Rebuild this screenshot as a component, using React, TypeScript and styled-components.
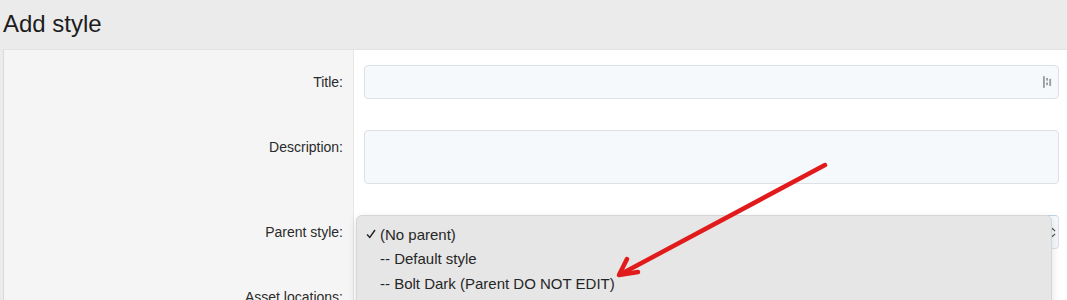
import React from "react";
import styled, { createGlobalStyle } from "styled-components";

const GlobalStyle = createGlobalStyle`
  html, body {
    margin: 0;
    background: #ebebeb;
    font-family: "Liberation Sans", Arial, sans-serif;
    color: #222;
    overflow: hidden;
  }
`;

const options = [
  { label: "(No parent)", checked: true },
  { label: "-- Default style", checked: false },
  { label: "-- Bolt Dark (Parent DO NOT EDIT)", checked: false },
];

function App() {
  return (
    <Page>
      <GlobalStyle />
      <Header>
        <Title>Add style</Title>
      </Header>
      <Panel>
        <Form>
          <Label>Title:</Label>
          <Field>
            <InputWrap>
              <TextInput type="text" />
              <FillIcon viewBox="0 0 10 13">
                <rect x="0" y="0" width="2" height="13" fill="#9a9a9a" />
                <rect x="3.5" y="2" width="2" height="3" fill="#9a9a9a" />
                <rect x="3.5" y="7" width="2" height="3" fill="#9a9a9a" />
                <rect x="7" y="3" width="2" height="8" fill="#9a9a9a" />
              </FillIcon>
            </InputWrap>
          </Field>

          <Label>Description:</Label>
          <Field>
            <TextArea />
          </Field>

          <Label>Parent style:</Label>
          <Field>
            <SelectWrap>
              <SelectBox>
                <Arrows viewBox="0 0 8 12">
                  <path d="M1 4.5 L4 1.5 L7 4.5" fill="none" stroke="#555" strokeWidth="1.4" />
                  <path d="M1 7.5 L4 10.5 L7 7.5" fill="none" stroke="#555" strokeWidth="1.4" />
                </Arrows>
              </SelectBox>
              <Menu>
                {options.map((o) => (
                  <MenuItem key={o.label}>
                    <CheckSlot>
                      {o.checked && (
                        <svg width="10" height="10" viewBox="0 0 10 10">
                          <path d="M1 5.5 L3.8 8.5 L9 1" fill="none" stroke="#222" strokeWidth="1.4" />
                        </svg>
                      )}
                    </CheckSlot>
                    {o.label}
                  </MenuItem>
                ))}
              </Menu>
            </SelectWrap>
          </Field>

          <Label>Asset locations:</Label>
          <Field>
            <Spacer />
          </Field>
        </Form>
      </Panel>
      <Annotation viewBox="0 0 1067 300" width="1067" height="300">
        <g stroke="#e11b1b" strokeWidth="4.5" strokeLinecap="round" fill="none">
          <line x1="825" y1="165" x2="621" y2="274" />
          <path d="M627 259 L619 275 L638 272" strokeLinejoin="round" />
        </g>
      </Annotation>
    </Page>
  );
}

const Page = styled.div`
  position: relative;
  width: 1067px;
  height: 300px;
  overflow: hidden;
`;

const Header = styled.div`
  height: 49px;
  padding: 10px 0 0 3px;
  box-sizing: border-box;
`;

const Title = styled.h1`
  margin: 0;
  font-size: 24px;
  line-height: 28px;
  font-weight: 400;
  color: #1d1d1d;
`;

const Panel = styled.div`
  margin-left: 3px;
  border-left: 1px solid #dadada;
  border-top: 1px solid #e2e2e2;
  background: #fff;
`;

const Form = styled.div`
  display: grid;
  grid-template-columns: 350px 1fr;
`;

const Label = styled.div`
  background: #f5f5f5;
  border-right: 1px solid #e6e6e6;
  padding: 15px 10px 16px 0;
  text-align: right;
  font-size: 14px;
  line-height: 34px;
  color: #2a2a2a;
`;

const Field = styled.div`
  padding: 15px 8px 16px 10px;
`;

const InputWrap = styled.div`
  position: relative;
`;

const TextInput = styled.input`
  display: block;
  width: 100%;
  height: 34px;
  box-sizing: border-box;
  border: 1px solid #dde1e5;
  border-radius: 4px;
  background: #f5f9fc;
  outline: none;
`;

const FillIcon = styled.svg`
  position: absolute;
  right: 7px;
  top: 11px;
  width: 9px;
  height: 12px;
`;

const TextArea = styled.div`
  height: 54px;
  box-sizing: border-box;
  border: 1px solid #dde1e5;
  border-radius: 4px;
  background: #f5f9fc;
`;

const SelectWrap = styled.div`
  position: relative;
`;

const SelectBox = styled.div`
  height: 34px;
  box-sizing: border-box;
  border: 1px solid #dde1e5;
  border-top-color: #bcd3e8;
  border-radius: 4px;
  background: #f5f9fc;
  display: flex;
  align-items: center;
  justify-content: flex-end;
  padding-right: 2px;
`;

const Arrows = styled.svg`
  width: 7px;
  height: 11px;
`;

const Menu = styled.div`
  position: absolute;
  left: -8px;
  right: 7px;
  top: 0;
  height: 110px;
  padding-top: 6px;
  box-sizing: border-box;
  background: #e6e6e6;
  border: 1px solid #d6d6d6;
  border-radius: 6px;
  box-shadow: 0 3px 10px rgba(0, 0, 0, 0.12);
`;

const MenuItem = styled.div`
  display: flex;
  align-items: center;
  height: 24.5px;
  padding-left: 9px;
  font-size: 15px;
  color: #262626;
  white-space: nowrap;
`;

const CheckSlot = styled.span`
  display: inline-flex;
  align-items: center;
  width: 14px;
`;

const Spacer = styled.div`
  height: 34px;
`;

const Annotation = styled.svg`
  position: absolute;
  left: 0;
  top: 0;
  pointer-events: none;
`;

export default App;
